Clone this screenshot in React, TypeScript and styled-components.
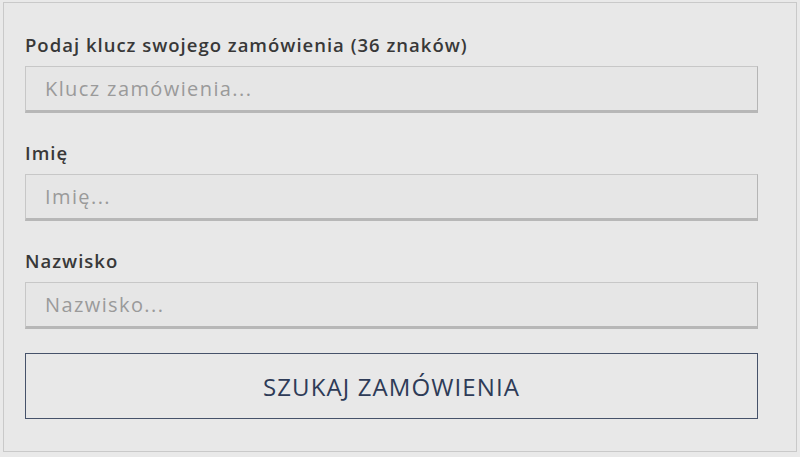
import styled, { createGlobalStyle } from "styled-components";

const GlobalStyle = createGlobalStyle`
  html, body {
    margin: 0;
    padding: 0;
    background: #e9e9e9;
  }
  body {
    font-family: "Open Sans", "Liberation Sans", sans-serif;
  }
  * {
    box-sizing: border-box;
  }
`;

const Panel = styled.form`
  margin: 2px 3px 0 3px;
  width: 794px;
  height: 450px;
  border: 1px solid #c9c9c9;
  background: #e8e8e8;
  padding: 29px 38px 0 21px;
  display: flex;
  flex-direction: column;
`;

const Field = styled.div`
  display: flex;
  flex-direction: column;
  margin-bottom: 27px;
`;

const Label = styled.label`
  display: block;
  font-size: 18.5px;
  font-weight: 600;
  letter-spacing: 1px;
  line-height: 25px;
  color: #383838;
  margin-bottom: 9px;
`;

const Input = styled.input`
  width: 100%;
  height: 47px;
  border: 1px solid #c7c7c7;
  border-bottom: 3px solid #b7b7b7;
  border-right-color: #b5b5b5;
  background: #e6e6e6;
  padding: 0 19px;
  font-family: "Open Sans", "Liberation Sans", sans-serif;
  font-size: 20px;
  letter-spacing: 1.4px;
  color: #333333;
  outline: none;

  &::placeholder {
    color: #9a9a9a;
  }
`;

const SubmitButton = styled.button`
  margin-top: -3px;
  width: 100%;
  height: 66px;
  border: 1px solid #46526a;
  background: #e8e8e8;
  color: #2e3b57;
  font-family: "Open Sans", "Liberation Sans", sans-serif;
  font-size: 24px;
  font-weight: 400;
  letter-spacing: 1.1px;
  cursor: pointer;
`;

const fields = [
  { id: "key", label: "Podaj klucz swojego zamówienia (36 znaków)", placeholder: "Klucz zamówienia..." },
  { id: "first", label: "Imię", placeholder: "Imię..." },
  { id: "last", label: "Nazwisko", placeholder: "Nazwisko..." },
];

export default function App() {
  return (
    <>
      <GlobalStyle />
      <Panel onSubmit={(e) => e.preventDefault()}>
        {fields.map((f) => (
          <Field key={f.id}>
            <Label htmlFor={f.id}>{f.label}</Label>
            <Input id={f.id} placeholder={f.placeholder} />
          </Field>
        ))}
        <SubmitButton type="submit">SZUKAJ ZAMÓWIENIA</SubmitButton>
      </Panel>
    </>
  );
}
